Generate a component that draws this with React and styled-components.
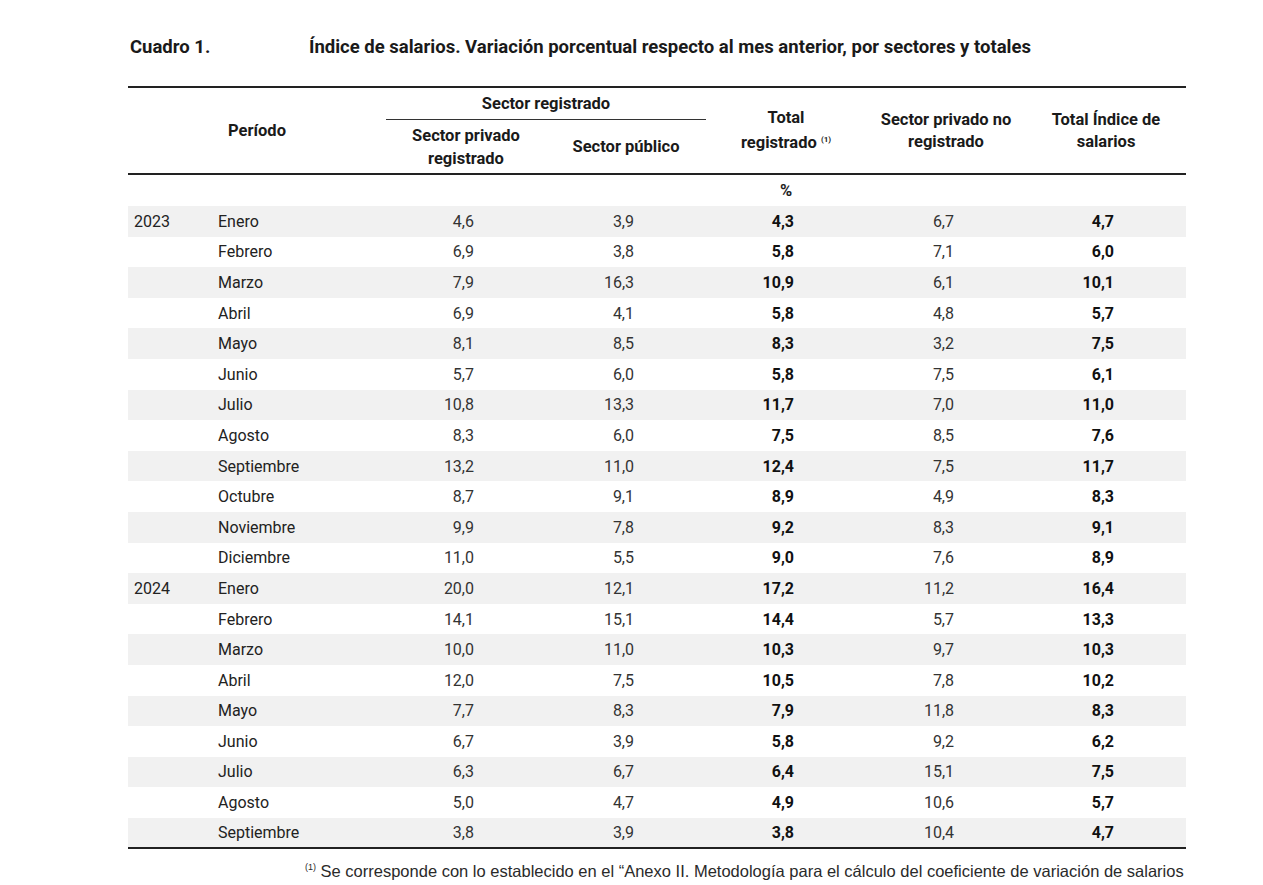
import React from "react";
import styled, { createGlobalStyle } from "styled-components";

const GlobalStyle = createGlobalStyle`
  html, body {
    margin: 0;
    padding: 0;
    background: #ffffff;
  }
  body {
    font-family: "Liberation Sans Narrow", "Roboto", "Liberation Sans", sans-serif;
    color: #1e1e1e;
  }
`;

const rows = [
  ["2023", "Enero", "4,6", "3,9", "4,3", "6,7", "4,7"],
  ["", "Febrero", "6,9", "3,8", "5,8", "7,1", "6,0"],
  ["", "Marzo", "7,9", "16,3", "10,9", "6,1", "10,1"],
  ["", "Abril", "6,9", "4,1", "5,8", "4,8", "5,7"],
  ["", "Mayo", "8,1", "8,5", "8,3", "3,2", "7,5"],
  ["", "Junio", "5,7", "6,0", "5,8", "7,5", "6,1"],
  ["", "Julio", "10,8", "13,3", "11,7", "7,0", "11,0"],
  ["", "Agosto", "8,3", "6,0", "7,5", "8,5", "7,6"],
  ["", "Septiembre", "13,2", "11,0", "12,4", "7,5", "11,7"],
  ["", "Octubre", "8,7", "9,1", "8,9", "4,9", "8,3"],
  ["", "Noviembre", "9,9", "7,8", "9,2", "8,3", "9,1"],
  ["", "Diciembre", "11,0", "5,5", "9,0", "7,6", "8,9"],
  ["2024", "Enero", "20,0", "12,1", "17,2", "11,2", "16,4"],
  ["", "Febrero", "14,1", "15,1", "14,4", "5,7", "13,3"],
  ["", "Marzo", "10,0", "11,0", "10,3", "9,7", "10,3"],
  ["", "Abril", "12,0", "7,5", "10,5", "7,8", "10,2"],
  ["", "Mayo", "7,7", "8,3", "7,9", "11,8", "8,3"],
  ["", "Junio", "6,7", "3,9", "5,8", "9,2", "6,2"],
  ["", "Julio", "6,3", "6,7", "6,4", "15,1", "7,5"],
  ["", "Agosto", "5,0", "4,7", "4,9", "10,6", "5,7"],
  ["", "Septiembre", "3,8", "3,9", "3,8", "10,4", "4,7"],
];

const App = () => {
  return (
    <Page>
      <GlobalStyle />
      <TitleBar>
        <TitleLabel>Cuadro 1.</TitleLabel>
        <TitleText>
          Índice de salarios. Variación porcentual respecto al mes anterior, por sectores y totales
        </TitleText>
      </TitleBar>

      <Table>
        <colgroup>
          <col style={{ width: 82 }} />
          <col style={{ width: 176 }} />
          <col style={{ width: 160 }} />
          <col style={{ width: 160 }} />
          <col style={{ width: 160 }} />
          <col style={{ width: 160 }} />
          <col style={{ width: 160 }} />
        </colgroup>
        <thead>
          <tr>
            <HeadCell colSpan={2} rowSpan={2}>Período</HeadCell>
            <GroupCell colSpan={2}>Sector registrado</GroupCell>
            <HeadCell rowSpan={2}>
              Total
              <br />
              registrado <Sup>(1)</Sup>
            </HeadCell>
            <HeadCell rowSpan={2}>
              Sector privado no
              <br />
              registrado
            </HeadCell>
            <HeadCell rowSpan={2}>
              Total Índice de
              <br />
              salarios
            </HeadCell>
          </tr>
          <tr>
            <SubHeadCell>
              Sector privado
              <br />
              registrado
            </SubHeadCell>
            <SubHeadCell>Sector público</SubHeadCell>
          </tr>
        </thead>
        <tbody>
          <UnitRow>
            <td colSpan={4} />
            <UnitCell>%</UnitCell>
            <td colSpan={2} />
          </UnitRow>
          {rows.map((r, i) => (
            <DataRow key={i} $shaded={i % 2 === 0}>
              <YearCell>{r[0]}</YearCell>
              <MonthCell>{r[1]}</MonthCell>
              <NumCell>{r[2]}</NumCell>
              <NumCell>{r[3]}</NumCell>
              <NumCell $bold>{r[4]}</NumCell>
              <NumCell>{r[5]}</NumCell>
              <NumCell $bold>{r[6]}</NumCell>
            </DataRow>
          ))}
        </tbody>
      </Table>

      <Footnote>
        <FootSup>(1)</FootSup> Se corresponde con lo establecido en el “Anexo II. Metodología para el cálculo del coeficiente de variación de salarios
        <br />
        (C.V.S.)” del Decreto 1.246/23.
      </Footnote>
    </Page>
  );
};

export default App;

const Page = styled.div`
  width: 1263px;
  height: 885px;
  overflow: hidden;
  padding: 36px 0 0 128px;
  box-sizing: border-box;
`;

const TitleBar = styled.div`
  display: flex;
  align-items: baseline;
  font-weight: bold;
  font-size: 18.5px;
  color: #1a1a1a;
  padding-left: 2px;
  margin-bottom: 28px;
`;

const TitleLabel = styled.div`
  width: 179px;
`;

const TitleText = styled.div``;

const Table = styled.table`
  width: 1058px;
  border-collapse: collapse;
  table-layout: fixed;
  border-top: 2px solid #222;
  border-bottom: 2px solid #222;
  font-size: 16px;

  thead {
    border-bottom: 2px solid #222;
  }

  td,
  th {
    padding: 0;
  }
`;

const HeadCell = styled.th`
  font-weight: bold;
  font-size: 16.5px;
  line-height: 22px;
  text-align: center;
  vertical-align: middle;
  color: #1a1a1a;
`;

const GroupCell = styled.th`
  font-weight: bold;
  font-size: 16.5px;
  height: 31px;
  text-align: center;
  vertical-align: middle;
  border-bottom: 1px solid #333;
  color: #1a1a1a;
`;

const SubHeadCell = styled.th`
  font-weight: bold;
  font-size: 16.5px;
  line-height: 23px;
  height: 53px;
  text-align: center;
  vertical-align: middle;
  color: #1a1a1a;
`;

const Sup = styled.sup`
  font-size: 8px;
  vertical-align: 6px;
`;

const UnitRow = styled.tr`
  height: 32px;
`;

const UnitCell = styled.td`
  font-weight: bold;
  text-align: center;
  font-size: 16.5px;
`;

const DataRow = styled.tr`
  height: 30.6px;
  background: ${(p) => (p.$shaded ? "#f1f1f1" : "transparent")};
`;

const YearCell = styled.td`
  padding-left: 6px !important;
  color: #222;
`;

const MonthCell = styled.td`
  padding-left: 8px !important;
  color: #222;
`;

const NumCell = styled.td`
  text-align: right;
  padding-right: 72px !important;
  font-weight: ${(p) => (p.$bold ? "bold" : "normal")};
  color: ${(p) => (p.$bold ? "#111" : "#333")};
`;

const Footnote = styled.div`
  margin: 8px 0 0 177px;
  font-family: "Liberation Sans", Arial, sans-serif;
  font-size: 16.5px;
  line-height: 21px;
  color: #2a2a2a;
`;

const FootSup = styled.sup`
  font-size: 9px;
  vertical-align: 7px;
`;
